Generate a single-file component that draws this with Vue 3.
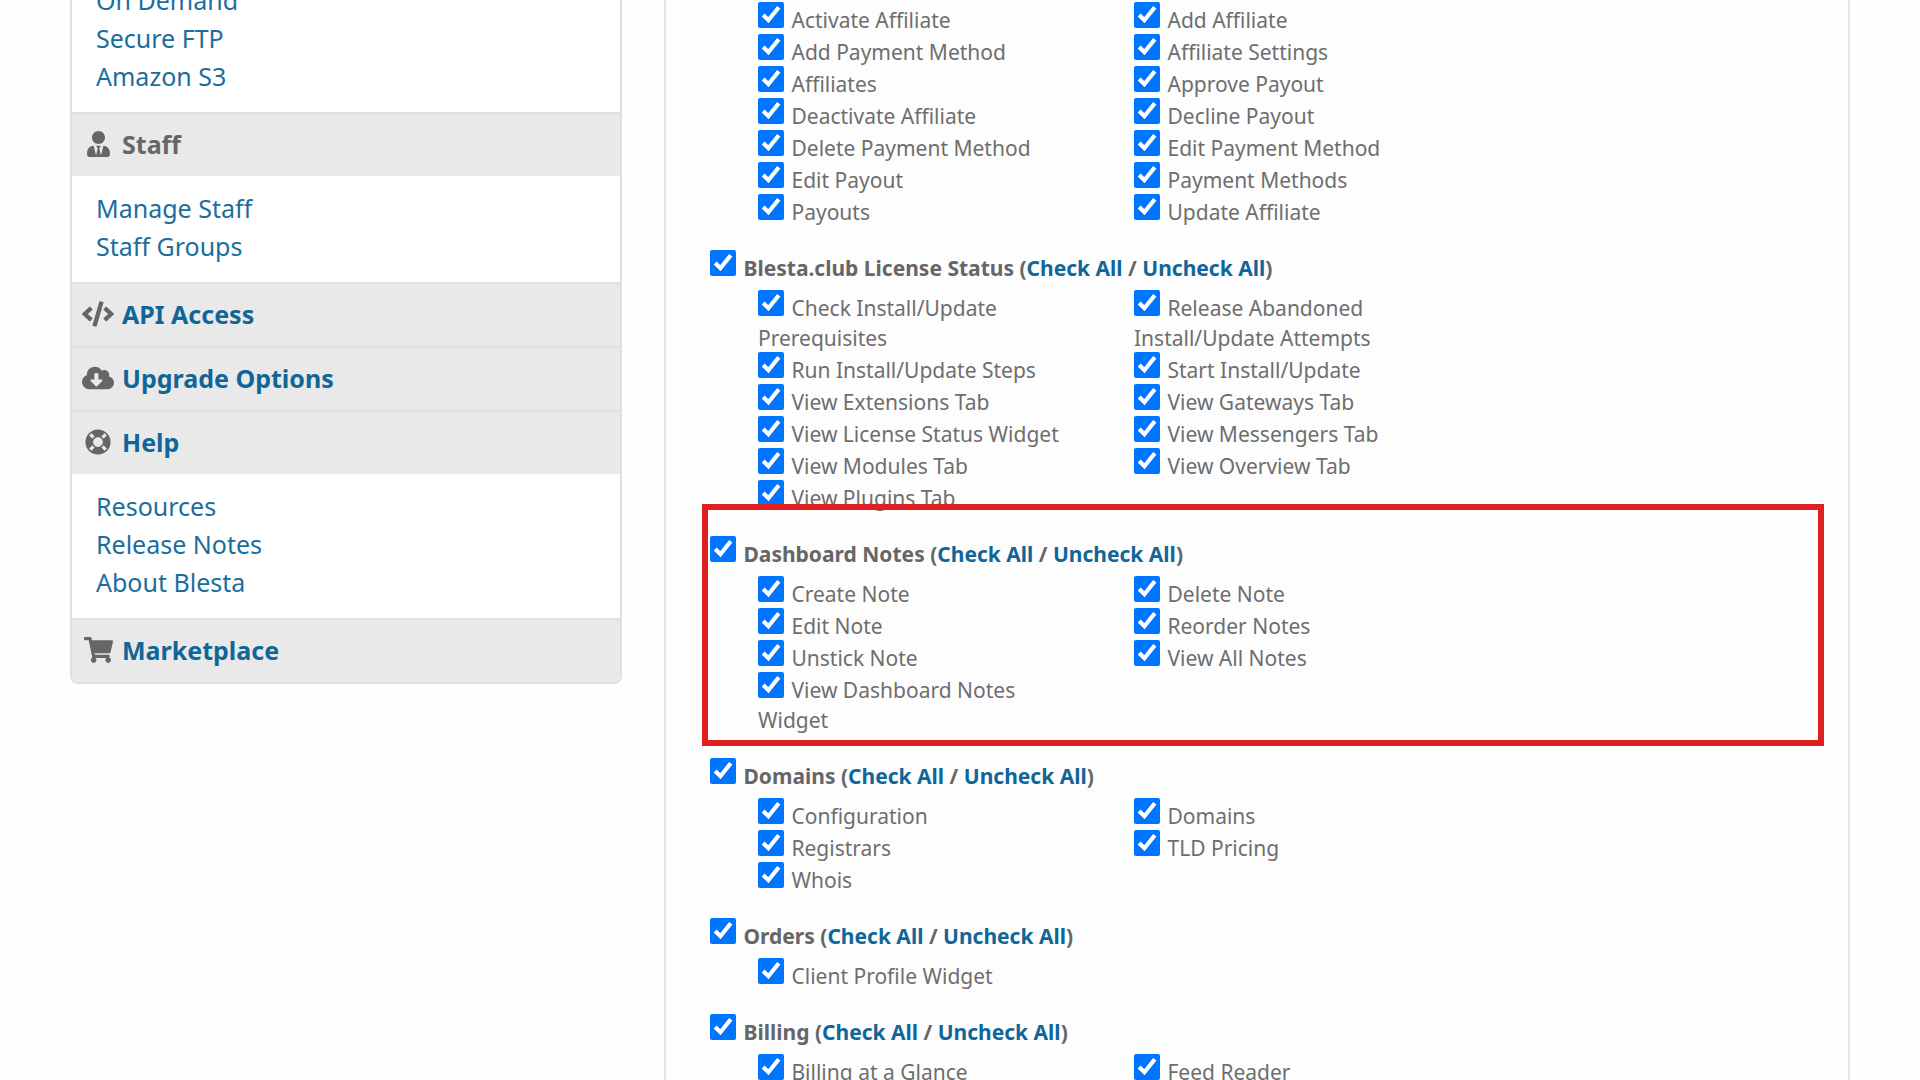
<script setup>
import { reactive } from 'vue'

const icons = {
  staff: {
    box: '0 0 448 512',
    width: 23,
    path: 'M224 256c70.7 0 128-57.3 128-128S294.7 0 224 0 96 57.3 96 128s57.3 128 128 128zm95.8 32.6L272 480l-32-136 32-56h-96l32 56-32 136-47.8-191.4C56.9 292 0 350.3 0 422.4V464c0 26.5 21.5 48 48 48h352c26.500 0 48-21.500 48-48v-41.600c0-72.100-56.900-130.400-128.200-133.800z',
  },
  code: {
    box: '0 0 640 512',
    width: 32,
    path: 'M278.900 511.500l-61-17.700c-6.400-1.800-10-8.500-8.200-14.900L346.200 8.700c1.800-6.400 8.500-10 14.900-8.200l61 17.700c6.400 1.800 10 8.500 8.200 14.900L293.800 503.300c-1.900 6.400-8.500 10.100-14.900 8.200zm-114-112.200l43.500-46.400c4.600-4.900 4.300-12.700-.8-17.200L117 256l90.600-79.700c5.100-4.500 5.500-12.300.8-17.200l-43.500-46.400c-4.500-4.800-12.100-5.100-17-.5L3.800 247.200c-5.100 4.700-5.100 12.800 0 17.500l144.100 135.100c4.900 4.600 12.500 4.400 17-.5zm327.200.6l144.100-135.100c5.100-4.700 5.100-12.800 0-17.500L492.100 112.100c-4.800-4.500-12.400-4.300-17 .5L431.600 159c-4.600 4.900-4.300 12.700.8 17.200L523 256l-90.600 79.700c-5.100 4.500-5.500 12.300-.8 17.200l43.500 46.400c4.500 4.900 12.100 5.100 17 .6z',
  },
  cloud: {
    box: '0 0 640 512',
    width: 32,
    path: 'M537.600 226.600c4.100-10.700 6.400-22.400 6.400-34.600 0-53-43-96-96-96-19.700 0-38.100 6-53.300 16.200C367 64.200 315.300 32 256 32c-88.400 0-160 71.600-160 160 0 2.700.1 5.400.2 8.100C40.200 219.800 0 273.200 0 336c0 79.500 64.500 144 144 144h368c70.700 0 128-57.300 128-128 0-61.900-44-113.600-102.400-125.400zm-132.900 88.700L299.300 420.700c-6.200 6.200-16.400 6.200-22.600 0L171.300 315.300c-10.100-10.100-2.900-27.300 11.300-27.300H248V176c0-8.800 7.200-16 16-16h48c8.800 0 16 7.200 16 16v112h65.400c14.200 0 21.400 17.200 11.300 27.300z',
  },
  help: {
    box: '0 0 512 512',
    width: 26,
    path: 'M256 8C119.033 8 8 119.033 8 256s111.033 248 248 248 248-111.033 248-248S392.967 8 256 8zm173.696 119.559l-63.399 63.399c-10.987-18.559-26.670-34.252-45.255-45.255l63.399-63.399a218.396 218.396 0 0 1 45.255 45.255zM256 352c-53.019 0-96-42.981-96-96s42.981-96 96-96 96 42.981 96 96-42.981 96-96 96zM127.559 82.304l63.399 63.399c-18.559 10.987-34.252 26.670-45.255 45.255l-63.399-63.399a218.372 218.372 0 0 1 45.255-45.255zM82.304 384.441l63.399-63.399c10.987 18.559 26.670 34.252 45.255 45.255l-63.399 63.399a218.396 218.396 0 0 1-45.255-45.255zm302.137 45.255l-63.399-63.399c18.559-10.987 34.252-26.670 45.255-45.255l63.399 63.399a218.403 218.403 0 0 1-45.255 45.255z',
  },
  cart: {
    box: '0 0 576 512',
    width: 29,
    path: 'M528.120 301.319l47.273-208C578.806 78.301 567.391 64 551.990 64H159.208l-9.166-44.810C147.758 8.021 137.930 0 126.529 0H24C10.745 0 0 10.745 0 24v16c0 13.255 10.745 24 24 24h69.883l70.248 343.435C147.325 417.100 136 435.222 136 456c0 30.928 25.072 56 56 56s56-25.072 56-56c0-15.674-6.447-29.835-16.824-40h209.647C430.447 426.165 424 440.326 424 456c0 30.928 25.072 56 56 56s56-25.072 56-56c0-22.172-12.888-41.332-31.579-50.405l5.517-24.276c3.413-15.018-8.002-29.319-23.403-29.319H218.117l-6.545-32h293.145c11.206 0 20.920-7.754 23.403-18.681z',
  },
}

const menu = [
  { links: ['On Demand', 'Secure FTP', 'Amazon S3'] },
  { title: 'Staff', icon: 'staff', current: true, links: ['Manage Staff', 'Staff Groups'] },
  { title: 'API Access', icon: 'code' },
  { title: 'Upgrade Options', icon: 'cloud' },
  { title: 'Help', icon: 'help', links: ['Resources', 'Release Notes', 'About Blesta'] },
  { title: 'Marketplace', icon: 'cart' },
]

const group = (title, names, marked = false) => ({
  title,
  marked,
  checked: true,
  items: names.map((name) => ({ name, checked: true })),
})

const groups = reactive([
  group('', [
    'Activate Affiliate', 'Add Affiliate',
    'Add Payment Method', 'Affiliate Settings',
    'Affiliates', 'Approve Payout',
    'Deactivate Affiliate', 'Decline Payout',
    'Delete Payment Method', 'Edit Payment Method',
    'Edit Payout', 'Payment Methods',
    'Payouts', 'Update Affiliate',
  ]),
  group('Blesta.club License Status', [
    'Check Install/Update Prerequisites', 'Release Abandoned Install/Update Attempts',
    'Run Install/Update Steps', 'Start Install/Update',
    'View Extensions Tab', 'View Gateways Tab',
    'View License Status Widget', 'View Messengers Tab',
    'View Modules Tab', 'View Overview Tab',
    'View Plugins Tab',
  ]),
  group('Dashboard Notes', [
    'Create Note', 'Delete Note',
    'Edit Note', 'Reorder Notes',
    'Unstick Note', 'View All Notes',
    'View Dashboard Notes Widget',
  ], true),
  group('Domains', ['Configuration', 'Domains', 'Registrars', 'TLD Pricing', 'Whois']),
  group('Orders', ['Client Profile Widget']),
  group('Billing', ['Billing at a Glance', 'Feed Reader']),
])

function setAll(target, value) {
  target.items.forEach((item) => { item.checked = value })
}
</script>

<template>
  <div class="page">
    <nav class="sidebar">
      <section v-for="(section, i) in menu" :key="i">
        <h2 v-if="section.title" class="section-title">
          <span class="icon">
            <svg :viewBox="icons[section.icon].box" :width="icons[section.icon].width" height="26" aria-hidden="true">
              <path :d="icons[section.icon].path" />
            </svg>
          </span>
          <span v-if="section.current">{{ section.title }}</span>
          <a v-else href="#">{{ section.title }}</a>
        </h2>
        <ul v-if="section.links" class="links">
          <li v-for="link in section.links" :key="link"><a href="#">{{ link }}</a></li>
        </ul>
      </section>
    </nav>

    <main class="panel">
      <section v-for="g in groups" :key="g.title" class="group">
        <div v-if="g.title" class="group-title">
          <label><input v-model="g.checked" type="checkbox"> {{ g.title }}</label>
          (<a href="#" @click.prevent="setAll(g, true)">Check All</a> / <a href="#" @click.prevent="setAll(g, false)">Uncheck All</a>)
        </div>
        <ul class="permissions">
          <li v-for="item in g.items" :key="item.name">
            <label><input v-model="item.checked" type="checkbox"> {{ item.name }}</label>
          </li>
        </ul>
        <div v-if="g.marked" class="marker"></div>
      </section>
    </main>
  </div>
</template>

<style>
body {
  margin: 0;
  background: #fefefe;
}
</style>

<style scoped>
.page {
  display: grid;
  grid-template-columns: 552fr 1186fr;
  gap: 42px;
  align-items: start;
  box-sizing: border-box;
  height: 100vh;
  padding: 0 70px;
  overflow: hidden;
  color: #666;
  font-family: "Noto Sans", "Open Sans", sans-serif;
}

a {
  color: #116699;
  text-decoration: none;
}

ul {
  margin: 0;
  padding: 0;
  list-style: none;
}

.sidebar {
  margin-top: -32px;
  border: 2px solid #e0e0e0;
  border-top: 0;
  border-radius: 0 0 8px 8px;
  overflow: hidden;
  background: #fff;
  font-size: 25px;
}

.section-title {
  display: flex;
  align-items: center;
  gap: 8px;
  box-sizing: border-box;
  height: 64px;
  margin: 0;
  padding: 0 10px 2px;
  border-top: 2px solid #e0e0e0;
  background: #e9e9e9;
  font-size: 25px;
  line-height: 38px;
}

.icon {
  display: flex;
  justify-content: center;
  width: 32px;
}

.icon svg {
  fill: #666;
}

.links {
  padding: 13px 24px 17px;
  line-height: 38px;
}

.links a {
  color: #1c6d9c;
}

.panel {
  min-height: 100vh;
  padding: 3px 44px 0;
  border: solid #e6e6e6;
  border-width: 0 2px;
  box-sizing: border-box;
  background: #fdfdfd;
  font-size: 21px;
  line-height: 30px;
}

.group {
  position: relative;
  margin-bottom: 24px;
}

.group-title {
  margin-bottom: 8px;
  font-weight: 700;
}

.permissions {
  display: grid;
  grid-template-columns: repeat(2, minmax(0, 312px));
  column-gap: 64px;
  padding-left: 48px;
  color: #6e6e6e;
}

input {
  width: 26px;
  height: 26px;
  margin: -1px 2px 0 0;
}

.marker {
  position: absolute;
  inset: -33px -20px -11px -8px;
  border: 6px solid #e02020;
  pointer-events: none;
}
</style>
